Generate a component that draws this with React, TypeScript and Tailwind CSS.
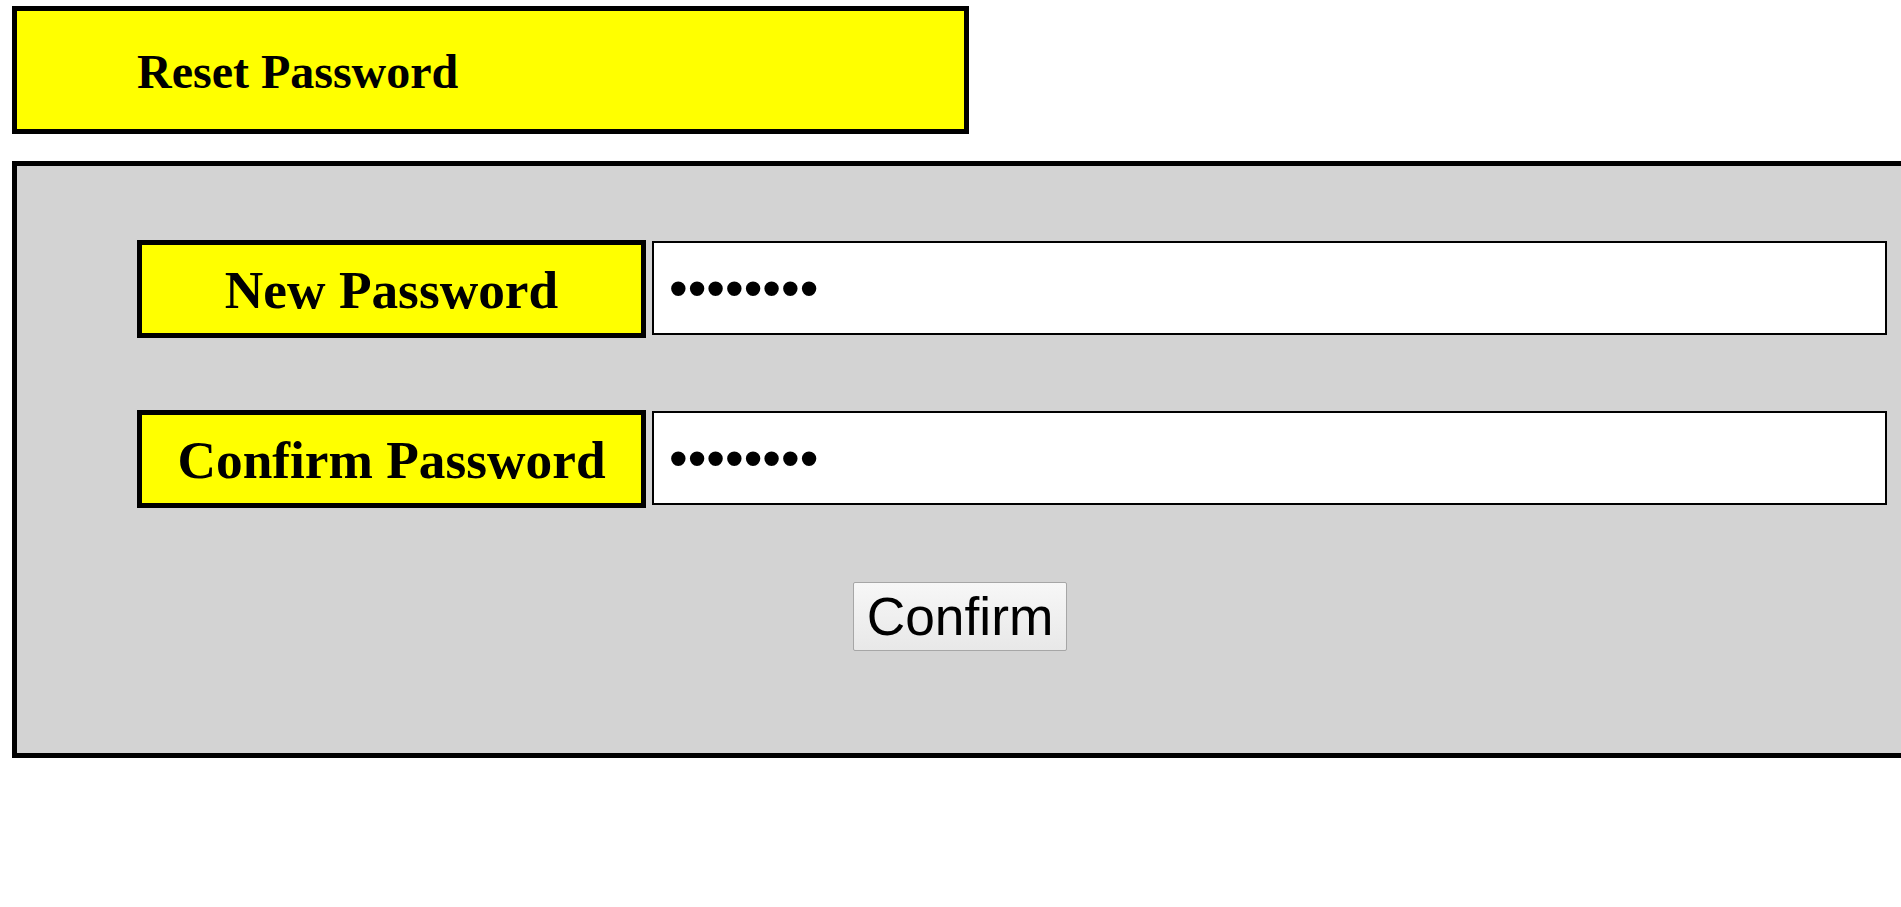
import React from 'react';

function PasswordRow({ label }: { label: string }) {
    return (
        <div className="flex items-start gap-[6px]">
            <div className="flex h-[98px] w-[509px] shrink-0 items-center justify-center border-[5px] border-black bg-[#ffff00] pt-[3px]">
                <span className="font-['Liberation_Serif',serif] text-[53.33px] font-bold text-black">{label}</span>
            </div>
            <input
                type="password"
                defaultValue="12345678"
                className="mt-px h-[94px] w-[1235px] shrink-0 border-2 border-black bg-white px-[15px] font-['Liberation_Sans',sans-serif] text-[53.33px] text-black outline-none"
            />
        </div>
    );
}

export default function App() {
    return (
        <div className="min-h-screen w-screen overflow-hidden bg-white pl-[12px] pt-[6px]">
            <div className="h-[128px] w-[957px] border-[5px] border-black bg-[#ffff00] pl-[120px] pt-[33px]">
                <h1 className="font-['Liberation_Serif',serif] text-[48px] font-bold leading-[55px] text-black">
                    Reset Password
                </h1>
            </div>

            <div className="mt-[27px] h-[597px] w-[1896px] border-[5px] border-black bg-[#d3d3d3] pl-[120px] pt-[74px]">
                <div className="flex flex-col gap-[72px]">
                    <PasswordRow label="New Password" />
                    <PasswordRow label="Confirm Password" />
                </div>
                <div className="-ml-[120px] mt-[74px] flex justify-center">
                    <button className="h-[69px] w-[214px] rounded-[2px] border border-[#a6a6a6] bg-gradient-to-b from-[#f7f7f7] to-[#e8e8e8] font-['Liberation_Sans',sans-serif] text-[53.33px] leading-none text-black">
                        Confirm
                    </button>
                </div>
            </div>
        </div>
    );
}
